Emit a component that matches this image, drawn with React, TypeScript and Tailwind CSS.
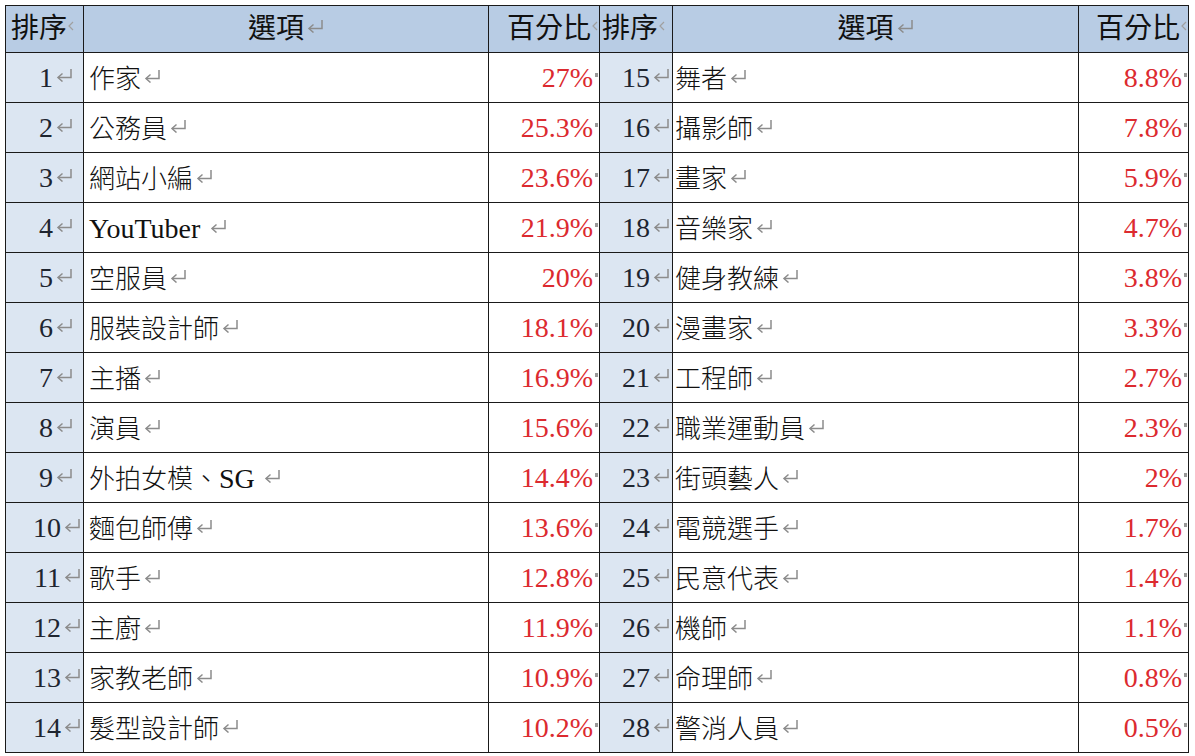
import type { ReactNode } from 'react'

type Row = { rank: number; name: string; pct: string }

const left: Row[] = [
  { rank: 1, name: '作家', pct: '27%' },
  { rank: 2, name: '公務員', pct: '25.3%' },
  { rank: 3, name: '網站小編', pct: '23.6%' },
  { rank: 4, name: 'YouTuber ', pct: '21.9%' },
  { rank: 5, name: '空服員', pct: '20%' },
  { rank: 6, name: '服裝設計師', pct: '18.1%' },
  { rank: 7, name: '主播', pct: '16.9%' },
  { rank: 8, name: '演員', pct: '15.6%' },
  { rank: 9, name: '外拍女模、SG ', pct: '14.4%' },
  { rank: 10, name: '麵包師傅', pct: '13.6%' },
  { rank: 11, name: '歌手', pct: '12.8%' },
  { rank: 12, name: '主廚', pct: '11.9%' },
  { rank: 13, name: '家教老師', pct: '10.9%' },
  { rank: 14, name: '髮型設計師', pct: '10.2%' },
]

const right: Row[] = [
  { rank: 15, name: '舞者', pct: '8.8%' },
  { rank: 16, name: '攝影師', pct: '7.8%' },
  { rank: 17, name: '畫家', pct: '5.9%' },
  { rank: 18, name: '音樂家', pct: '4.7%' },
  { rank: 19, name: '健身教練', pct: '3.8%' },
  { rank: 20, name: '漫畫家', pct: '3.3%' },
  { rank: 21, name: '工程師', pct: '2.7%' },
  { rank: 22, name: '職業運動員', pct: '2.3%' },
  { rank: 23, name: '街頭藝人', pct: '2%' },
  { rank: 24, name: '電競選手', pct: '1.7%' },
  { rank: 25, name: '民意代表', pct: '1.4%' },
  { rank: 26, name: '機師', pct: '1.1%' },
  { rank: 27, name: '命理師', pct: '0.8%' },
  { rank: 28, name: '警消人員', pct: '0.5%' },
]

// Word 的段落符號
function Mark() {
  return (
    <svg width="18" height="14" viewBox="0 0 18 14" className="ml-[2px] inline-block align-[5px]">
      <path d="M16 1 V9.5 H3" fill="none" stroke="#8c8c8c" strokeWidth="1.5" />
      <path d="M7.5 5.5 L3 9.5 L7.5 13.5" fill="none" stroke="#8c8c8c" strokeWidth="1.5" />
    </svg>
  )
}

// 表頭被截斷的小箭頭
function HalfMark() {
  return (
    <svg width="6" height="12" viewBox="0 0 6 12" className="ml-[1px] inline-block align-[6px]">
      <path d="M5 2 L1 6 L5 10" fill="none" stroke="#a0a0a0" strokeWidth="1.2" />
    </svg>
  )
}

function Dot() {
  return <span className="ml-[2px] inline-block h-[4px] w-[3px] bg-[#9a9a9a] align-[10px]" />
}

function Name({ text }: { text: string }) {
  const parts: ReactNode[] = text.split(/([A-Za-z]+)/).map((p, i) =>
    /[A-Za-z]/.test(p) ? (
      <span key={i} className="text-[28px] font-normal">
        {p}
      </span>
    ) : (
      <span key={i}>{p}</span>
    ),
  )
  return (
    <span className="text-[26px] font-light whitespace-pre">
      {parts}
      <Mark />
    </span>
  )
}

const cell = 'border border-[#1a1a1a] p-0 h-[50px]'
const head = 'border border-[#1a1a1a] p-0 font-normal'

export default function App() {
  return (
    <div
      className="h-[756px] w-[1195px] bg-white pl-[5px] pt-[5px] text-[#111]"
      style={{ fontFamily: '"Liberation Serif", "Noto Sans CJK TC", serif' }}
    >
      <table className="w-[1183px] table-fixed border-collapse">
        <colgroup>
          <col className="w-[78px]" />
          <col className="w-[405px]" />
          <col className="w-[111px]" />
          <col className="w-[73px]" />
          <col className="w-[406px]" />
          <col className="w-[110px]" />
        </colgroup>
        <thead>
          <tr className="bg-[#b8cce4] text-[28px]">
            <th className={`${head} h-[47px] pl-[5px] text-left`}>
              排序<HalfMark />
            </th>
            <th className={`${head} text-center`}>
              選項<Mark />
            </th>
            <th className={`${head} pr-[1px] text-right`}>
              百分比<HalfMark />
            </th>
            <th className={`${head} pl-[2px] text-left`}>
              排序<HalfMark />
            </th>
            <th className={`${head} text-center`}>
              選項<Mark />
            </th>
            <th className={`${head} pr-[1px] text-right`}>
              百分比<HalfMark />
            </th>
          </tr>
        </thead>
        <tbody>
          {left.map((l, i) => {
            const r = right[i]
            return (
              <tr key={l.rank} className="h-[50px]">
                <td className={`${cell} bg-[#dce6f2] text-right text-[28px] text-[#1e2530] ${l.rank < 10 ? 'pr-[10px]' : 'pr-[2px]'}`}>
                  {l.rank}
                  <Mark />
                </td>
                <td className={`${cell} pl-[5px] pt-[3px]`}>
                  <Name text={l.name} />
                </td>
                <td className={`${cell} pr-[1px] text-right text-[28px] text-[#dc2a2f]`}>
                  {l.pct}
                  <Dot />
                </td>
                <td className={`${cell} bg-[#dce6f2] pr-[2px] text-right text-[28px] text-[#1e2530]`}>
                  {r.rank}
                  <Mark />
                </td>
                <td className={`${cell} pl-[2px] pt-[3px]`}>
                  <Name text={r.name} />
                </td>
                <td className={`${cell} pr-[1px] text-right text-[28px] text-[#dc2a2f]`}>
                  {r.pct}
                  <Dot />
                </td>
              </tr>
            )
          })}
        </tbody>
      </table>
    </div>
  )
}
